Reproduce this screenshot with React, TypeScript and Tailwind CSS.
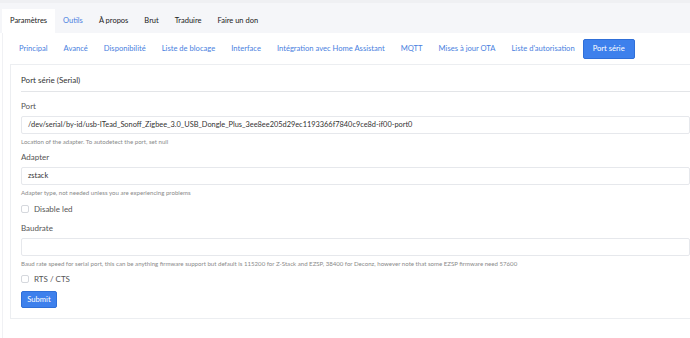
import React from 'react';

const topTabs = ['Paramètres', 'Outils', 'À propos', 'Brut', 'Traduire', 'Faire un don'];
const subTabs = [
  'Principal',
  'Avancé',
  'Disponibilité',
  'Liste de blocage',
  'Interface',
  'Intégration avec Home Assistant',
  'MQTT',
  'Mises à jour OTA',
  "Liste d'autorisation",
];

function Field({ label, value, help, top }: { label: string; value: string; help: string; top: string }) {
  return (
    <div>
      <div className={'text-[8px] leading-[12px] text-[#555] ' + top}>{label}</div>
      <div className="mt-[4px] h-[18px] border border-[#e6e8ec] rounded-[2px] flex items-center px-[6px] text-[7.4px] text-[#333] whitespace-nowrap overflow-hidden">
        {value}
      </div>
      <div className="mt-[3px] text-[6.1px] leading-[9px] text-[#8a8a8a] whitespace-nowrap">{help}</div>
    </div>
  );
}

function Check({ label, top }: { label: string; top: string }) {
  return (
    <div className={'flex items-center gap-[5px] h-[10px] ' + top}>
      <span className="w-[8px] h-[8px] border border-[#d5d8dd] rounded-[2px] bg-white" />
      <span className="text-[8px] text-[#555]">{label}</span>
    </div>
  );
}

export default function App() {
  return (
    <div className="w-[690px] h-[338px] bg-white overflow-hidden" style={{ fontFamily: 'Lato, "Noto Sans", sans-serif' }}>
      <nav className="h-[33px] bg-[#f5f6f9] flex items-end pl-[2px] border-t-[3px] border-[#eff0f3]">
        {topTabs.map((t, i) => (
          <div
            key={t}
            className={
              'h-[24px] flex items-center px-[8px] text-[7.5px] ' +
              (i === 0 ? 'bg-white text-[#222]' : i === 1 ? 'text-[#4a7fe0]' : 'text-[#222]')
            }
          >
            {t}
          </div>
        ))}
      </nav>
      <div className="border-l border-[#f0f1f4] ml-[2px] h-[305px] pl-[7px]">
        <div className="flex items-center h-[31px] pl-[1px]">
          {subTabs.map((t) => (
            <div key={t} className="px-[8px] text-[7.6px] text-[#4a7fe0] whitespace-nowrap">
              {t}
            </div>
          ))}
          <div className="h-[20px] px-[9px] flex items-center bg-[#3d80ec] border border-[#2f6fd8] rounded-[2px] text-white text-[7.6px] whitespace-nowrap">
            Port série
          </div>
        </div>
        <div className="border border-[#eceef1] border-r-0 h-[255px] pl-[10px] pt-[9px]">
          <div className="text-[8px] text-[#333] leading-[12px]">Port série (Serial)</div>
          <div className="mt-[5px] border-t border-[#e3e5e8]" />
          <Field
            top="mt-[8px]"
            label="Port"
            value="/dev/serial/by-id/usb-ITead_Sonoff_Zigbee_3.0_USB_Dongle_Plus_3ee8ee205d29ec1193366f7840c9ce8d-if00-port0"
            help="Location of the adapter. To autodetect the port, set null"
          />
          <Field top="mt-[5px]" label="Adapter" value="zstack" help="Adapter type, not needed unless you are experiencing problems" />
          <Check top="mt-[7px]" label="Disable led" />
          <Field
            top="mt-[8px]"
            label="Baudrate"
            value=""
            help="Baud rate speed for serial port, this can be anything firmware support but default is 115200 for Z-Stack and EZSP, 38400 for Deconz, however note that some EZSP firmware need 57600"
          />
          <Check top="mt-[6px]" label="RTS / CTS" />
          <div className="mt-[7px] w-[36px] h-[17px] bg-[#3d80ec] border border-[#2f6fd8] rounded-[2px] text-white text-[7.6px] flex items-center justify-center">
            Submit
          </div>
        </div>
      </div>
    </div>
  );
}
